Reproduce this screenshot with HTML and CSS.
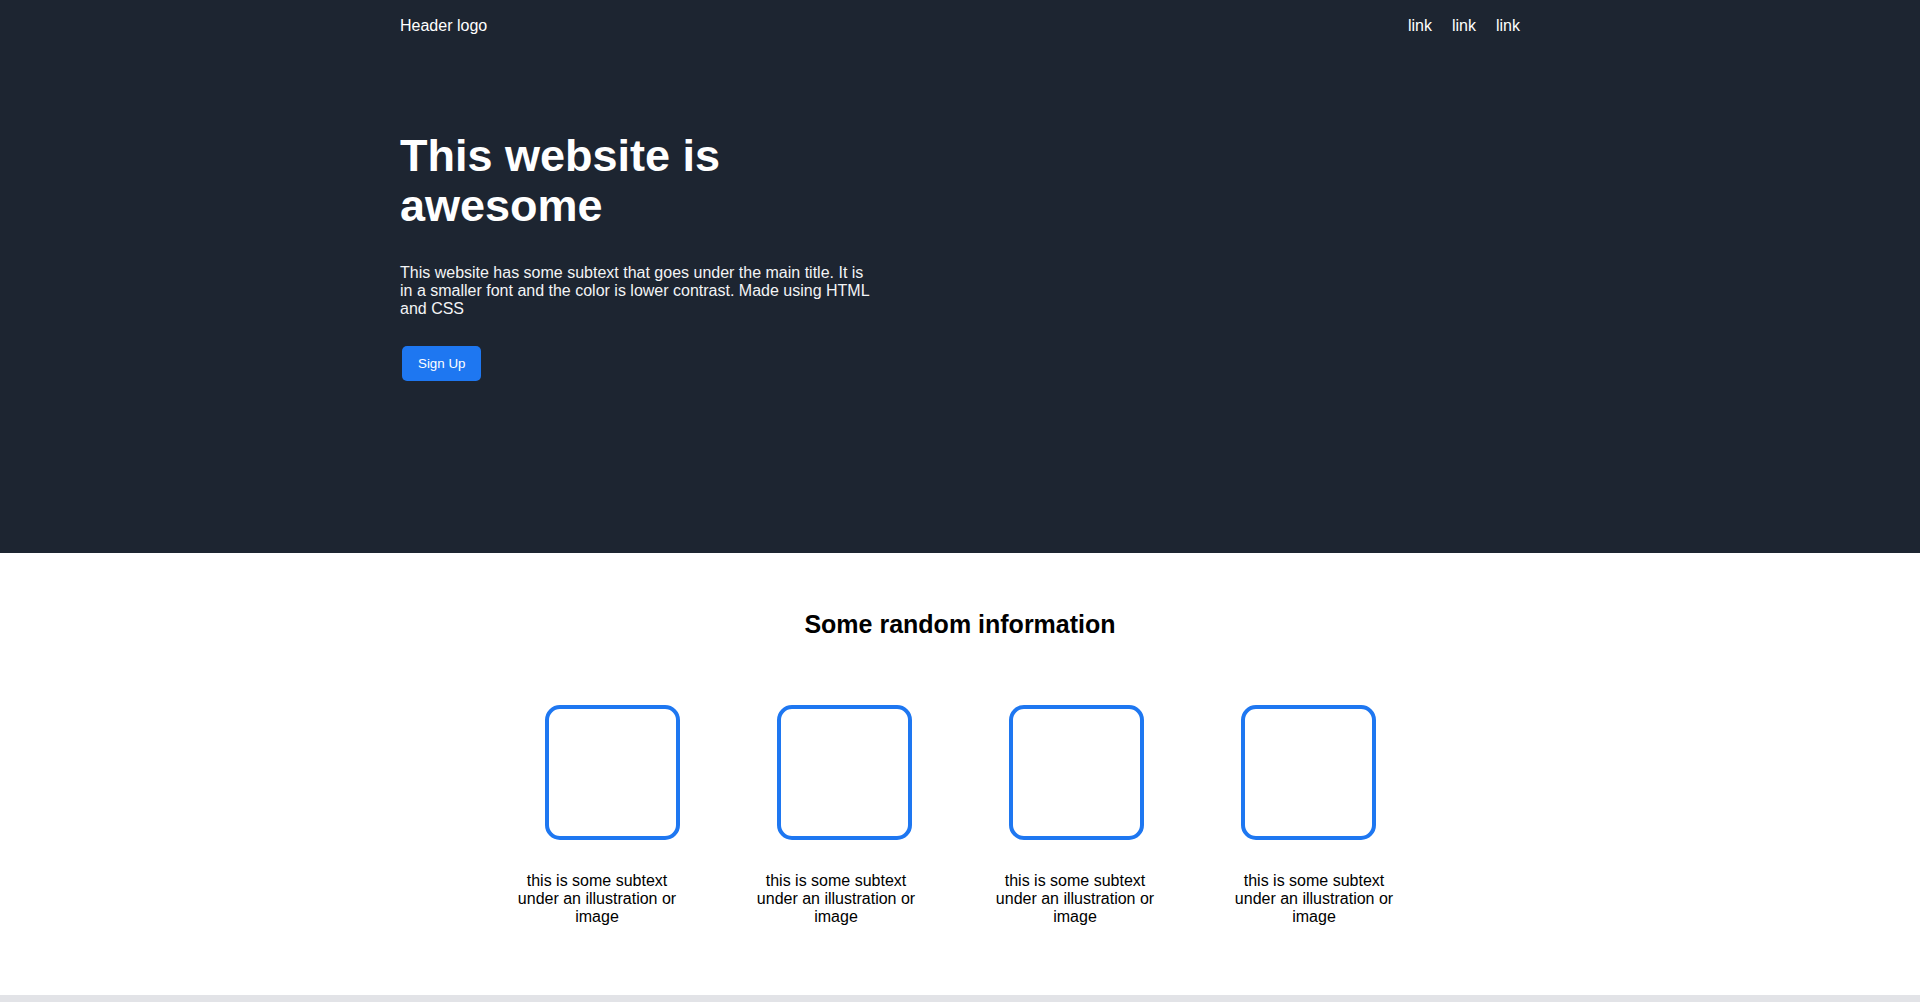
FILE: index.html
```html
<!DOCTYPE html>
<html lang="en">
<head>
    <meta charset="UTF-8">
    <meta name="viewport" content="width=device-width, initial-scale=1.0">
    <title>Landing Page</title>
    <link rel="stylesheet" href="styles.css">
</head>
<body>
    <div class="hero">
        <div class="container">
            <div class="header">
                <div class="header-logo">Header logo</div>
                <div class="header-links">
                    <a href="#">link</a>
                    <a href="#">link</a>
                    <a href="#">link</a>
                </div>
            </div>

            <div class="hero-text">
                <h1>This website is awesome</h1>
                <p>This website has some subtext that goes under the main title. It is in a smaller font and the color is lower contrast. Made using HTML and CSS</p>
                <button class="signup">Sign Up</button>
            </div>
        </div>
    </div>

    <div class="info">
        <h2>Some random information</h2>

        <div class="info-boxes">
            <div class="box"></div>
            <div class="box"></div>
            <div class="box"></div>
            <div class="box"></div>
        </div>

        <div class="info-captions">
            <p>this is some subtext under an illustration or image</p>
            <p>this is some subtext under an illustration or image</p>
            <p>this is some subtext under an illustration or image</p>
            <p>this is some subtext under an illustration or image</p>
        </div>
    </div>
</body>
</html>
```

FILE: styles.css
```css
body {
    margin: 0;
    font-family: 'Liberation Sans', Arial, sans-serif;
    font-size: 16px;
    background-color: #e2e3e7;
    color: #000;
}

.hero {
    background-color: #1d2531;
    padding: 17px 0 172px;
}

.container {
    width: 1120px;
    margin: 0 auto;
}

.header {
    display: flex;
    justify-content: space-between;
    color: #ffffff;
}

.header-links {
    display: flex;
    gap: 20px;
}

.header-links a {
    color: #ffffff;
    text-decoration: none;
}

.hero-text {
    width: 480px;
    margin-top: 96px;
}

.hero-text h1 {
    margin: 0 0 33px;
    font-size: 45px;
    line-height: 50px;
    font-weight: 700;
    color: #ffffff;
}

.hero-text p {
    margin: 0;
    color: #f3f4f6;
}

.signup {
    margin: 28px 0 0 2px;
    padding: 10px 16px;
    border: none;
    border-radius: 5px;
    background-color: #1e77f1;
    color: #ffffff;
    font-family: 'Liberation Sans', Arial, sans-serif;
    font-size: 13.33px;
    cursor: pointer;
}

.info {
    background-color: #ffffff;
    padding: 57px 0 69px;
    text-align: center;
}

.info h2 {
    margin: 0 0 66px;
    font-size: 25px;
    font-weight: 700;
}

.info-boxes {
    display: flex;
    justify-content: center;
    gap: 97px;
}

.box {
    width: 127px;
    height: 127px;
    border: 4px solid #1e77f1;
    border-radius: 15px;
}

.info-captions {
    display: flex;
    justify-content: center;
    gap: 79px;
    margin-top: 32px;
    padding-right: 9px;
}

.info-captions p {
    width: 160px;
    margin: 0;
}
```
